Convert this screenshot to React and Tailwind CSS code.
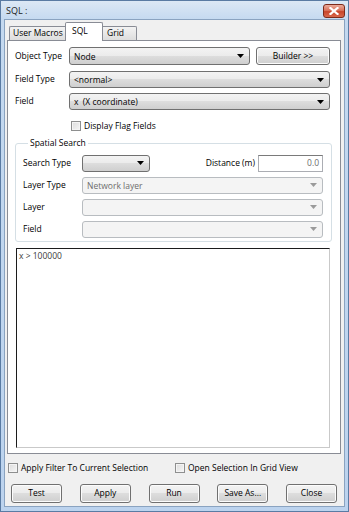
import React from 'react';

const comboBg =
  'bg-[linear-gradient(to_bottom,#f3f3f3_0%,#ebebeb_50%,#dddddd_50%,#cfcfcf_100%)]';

// Vista style drop down
function Combo({ value, disabled, className = '' }) {
  return (
    <div
      className={`flex items-center h-[17px] rounded-[3px] border ${
        disabled
          ? 'border-[#b8bcc0] bg-[#f4f4f4] text-[#6d6d6d]'
          : `border-[#707070] ${comboBg} text-black`
      } ${className}`}
    >
      <span className="flex-1 pl-[4px] leading-[13px] whitespace-pre overflow-hidden">{value}</span>
      <svg width="7" height="4" viewBox="0 0 7 4" className="mr-[5px] shrink-0">
        <path d="M0 0h7L3.5 4z" fill={disabled ? '#9a9a9a' : '#000'} />
      </svg>
    </div>
  );
}

function Button({ children, className = '' }) {
  return (
    <div
      className={`flex items-center justify-center rounded-[3px] border border-[#707070] ${comboBg} shadow-[inset_0_0_0_1px_#fcfcfc] ${className}`}
    >
      {children}
    </div>
  );
}

function CheckBox({ label, className = '' }) {
  return (
    <div className={`flex items-center gap-[3px] ${className}`}>
      <div className="w-[10px] h-[10px] border border-[#8e8f8f] bg-[linear-gradient(135deg,#dcdcdc,#f6f6f6)] shadow-[inset_0_0_0_1px_#f4f4f4]" />
      <span>{label}</span>
    </div>
  );
}

function Row({ label, children, labelWidth }) {
  return (
    <div className="flex items-center">
      <span className={`${labelWidth} shrink-0`}>{label}</span>
      {children}
    </div>
  );
}

export default function App() {
  return (
    <div className="w-[349px] h-[512px] flex flex-col bg-[linear-gradient(to_bottom,#dce8f5_0px,#c4d9f0_19px,#bcd3ee_100%)] border border-[#5a7ba3] font-['Open_Sans',sans-serif] text-[8.5px] text-black leading-none">
      {/* title bar */}
      <div className="h-[18px] flex items-center justify-between pl-[5px] pr-[3px]">
        <span className="text-[9px] text-[#1b1b1b]">SQL :</span>
        <div className="w-[22px] h-[14px] mt-[2px] rounded-[3px] border border-[#7d2a1a] bg-[linear-gradient(to_bottom,#ecab9b_0%,#d9735c_45%,#c8452b_55%,#d8684c_100%)] flex items-center justify-center">
          <svg width="10" height="8" viewBox="0 0 10 8">
            <path d="M1.5 1l7 6M8.5 1l-7 6" stroke="#fff" strokeWidth="2.2" strokeLinecap="square" />
          </svg>
        </div>
      </div>

      {/* client area */}
      <div className="flex-1 mx-[3px] mb-[4px] bg-[#f0f0f0] border border-[#8aa3c0] flex flex-col">
        {/* tabs */}
        <div className="flex items-end h-[18px] mt-[2px] pl-[4px] relative z-10">
          <div className="h-[14px] w-[56px] flex items-center pl-[3px] whitespace-nowrap border border-r-0 border-b-0 border-[#898c95] rounded-tl-[2px] bg-[linear-gradient(to_bottom,#f3f3f3,#dddddd)]">
            User Macros
          </div>
          <div className="h-[19px] -mb-px w-[38px] flex items-start pt-[4px] pl-[6px] border border-b-0 border-[#898c95] rounded-t-[2px] bg-white">
            SQL
          </div>
          <div className="h-[14px] w-[34px] flex items-center pl-[4px] border border-l-0 border-b-0 border-[#898c95] rounded-tr-[2px] bg-[linear-gradient(to_bottom,#f3f3f3,#dddddd)]">
            Grid
          </div>
        </div>

        {/* tab page */}
        <div className="flex-1 ml-[2px] mr-[3px] border border-[#898c95] bg-white flex flex-col pl-[7px] pr-[10px] pt-[6px] pb-[5px]">
          <Row label="Object Type" labelWidth="w-[54px]">
            <Combo value="Node" className="w-[181px] h-[18px]" />
            <Button className="ml-[6px] flex-1 h-[18px]">Builder &gt;&gt;</Button>
          </Row>
          <div className="mt-[6px]">
            <Row label="Field Type" labelWidth="w-[54px]">
              <Combo value="<normal>" className="flex-1" />
            </Row>
          </div>
          <div className="mt-[5px]">
            <Row label="Field" labelWidth="w-[54px]">
              <Combo value="x  (X coordinate)" className="flex-1" />
            </Row>
          </div>
          <CheckBox label="Display Flag Fields" className="ml-[56px] mt-[11px]" />

          {/* spatial search group */}
          <fieldset className="mt-[8px] mr-[-2px] border border-[#d5dfe5] rounded-[3px] pl-[7px] pr-[8px] pb-[3px]">
            <legend className="ml-[5px] px-[2px] text-black">Spatial Search</legend>
            <div className="flex flex-col gap-[5px] mt-[7px]">
              <Row label="Search Type" labelWidth="w-[59px]">
                <Combo value="" className="w-[68px]" />
                <span className="ml-auto mr-[3px]">Distance (m)</span>
                <div className="w-[65px] h-[17px] border border-[#abadb3] border-t-[#7a7a7a] bg-white flex items-center justify-end pr-[3px] text-[#6d6d6d]">
                  0.0
                </div>
              </Row>
              <Row label="Layer Type" labelWidth="w-[59px]">
                <Combo value="Network layer" disabled className="flex-1" />
              </Row>
              <Row label="Layer" labelWidth="w-[59px]">
                <Combo value="" disabled className="flex-1" />
              </Row>
              <Row label="Field" labelWidth="w-[59px]">
                <Combo value="" disabled className="flex-1" />
              </Row>
            </div>
          </fieldset>

          {/* query text */}
          <div className="flex-1 mt-[6px] ml-[1px] border border-[#1c1c1c] border-r-[#c9c9c9] border-b-[#c9c9c9] bg-white px-[2px] pt-[3px] text-[#3a3a3a]">
            x &gt; 100000
          </div>
        </div>

        {/* options */}
        <div className="flex items-center h-[16px] mt-[6px] pl-[3px]">
          <CheckBox label="Apply Filter To Current Selection" className="w-[167px]" />
          <CheckBox label="Open Selection In Grid View" />
        </div>

        {/* buttons */}
        <div className="flex justify-between mt-[8px] mb-[3px] pl-[6px] pr-[7px]">
          {['Test', 'Apply', 'Run', 'Save As...', 'Close'].map((b) => (
            <Button key={b} className="w-[51px] h-[19px]">
              {b}
            </Button>
          ))}
        </div>
      </div>
    </div>
  );
}
